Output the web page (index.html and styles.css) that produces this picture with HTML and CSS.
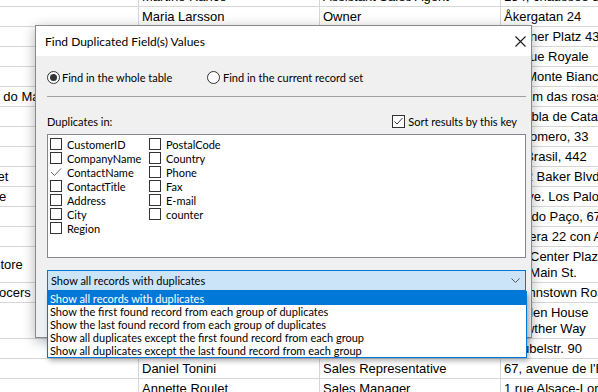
FILE: index.html
```html
<!DOCTYPE html>
<html>
<head>
<meta charset="utf-8">
<title>Find Duplicated Field(s) Values</title>
<link rel="stylesheet" href="styles.css">
</head>
<body>
<div class="grid">
  <div class="row"><div class="c">Folies gourmandes</div><div class="c">Martine Rancé</div><div class="c">Assistant Sales Agent</div><div class="c">184, chaussée de Tournai</div></div>
  <div class="row"><div class="c">Folk och fä HB</div><div class="c">Maria Larsson</div><div class="c">Owner</div><div class="c">Åkergatan 24</div></div>
  <div class="row"><div class="c">Frankenversand</div><div class="c">Peter Franken</div><div class="c">Marketing Manager</div><div class="c">Berliner Platz 43</div></div>
  <div class="row"><div class="c">France restauration</div><div class="c">Carine Schmitt</div><div class="c">Marketing Manager</div><div class="c">54, rue Royale</div></div>
  <div class="row"><div class="c">Franchi S.p.A.</div><div class="c">Paolo Accorti</div><div class="c">Sales Representative</div><div class="c">Via Monte Bianco 34</div></div>
  <div class="row"><div class="c">Furia Bacalhau e Frutos do Mar</div><div class="c">Lino Rodriguez</div><div class="c">Sales Manager</div><div class="c">Jardim das rosas n. 32</div></div>
  <div class="row"><div class="c">Galería del gastrónomo</div><div class="c">Eduardo Saavedra</div><div class="c">Marketing Manager</div><div class="c">Rambla de Cataluña, 23</div></div>
  <div class="row"><div class="c">Godos Cocina Típica</div><div class="c">José Pedro Freyre</div><div class="c">Sales Manager</div><div class="c">C/ Romero, 33</div></div>
  <div class="row"><div class="c">Gourmet Lanchonetes</div><div class="c">André Fonseca</div><div class="c">Sales Associate</div><div class="c">Av. Brasil, 442</div></div>
  <div class="row"><div class="c">Great Lakes Food Market</div><div class="c">Howard Snyder</div><div class="c">Marketing Manager</div><div class="c">2732 Baker Blvd.</div></div>
  <div class="row"><div class="c">GROSELLA-Restaurante</div><div class="c">Manuel Pereira</div><div class="c">Owner</div><div class="c">5ª Ave. Los Palos Grandes</div></div>
  <div class="row"><div class="c">Hanari Carnes</div><div class="c">Mario Pontes</div><div class="c">Accounting Manager</div><div class="c">Rua do Paço, 67</div></div>
  <div class="row"><div class="c">HILARIÓN-Abastos</div><div class="c">Carlos Hernández</div><div class="c">Sales Representative</div><div class="c">Carrera 22 con Ave. Carlos Soublette #8-35</div></div>
  <div class="row tall"><div class="c">Hungry Coyote Import Store</div><div class="c">Yoshi Latimer</div><div class="c">Sales Representative</div><div class="c wrap">City Center Plaza 516 Main St.</div></div>
  <div class="row"><div class="c">Hungry Owl All-Night Grocers</div><div class="c">Patricia McKenna</div><div class="c">Sales Associate</div><div class="c">8 Johnstown Road</div></div>
  <div class="row tall"><div class="c">Island Trading</div><div class="c">Helen Bennett</div><div class="c">Marketing Manager</div><div class="c wrap">Garden House Crowther Way</div></div>
  <div class="row"><div class="c">Königlich Essen</div><div class="c">Philip Cramer</div><div class="c">Sales Associate</div><div class="c">Maubelstr. 90</div></div>
  <div class="row"><div class="c blank">La corne d'abondance</div><div class="c">Daniel Tonini</div><div class="c">Sales Representative</div><div class="c">67, avenue de l'Europe</div></div>
  <div class="row"><div class="c blank">La maison d'Asie</div><div class="c">Annette Roulet</div><div class="c">Sales Manager</div><div class="c">1 rue Alsace-Lorraine</div></div>
</div>

<div class="dialog">
  <div class="titlebar">
    <span class="title">Find Duplicated Field(s) Values</span>
    <span class="close"><svg width="11" height="11" viewBox="0 0 11 11"><path d="M0.5 0.5 L10.5 10.5 M10.5 0.5 L0.5 10.5" stroke="#1a1a1a" stroke-width="1.1" fill="none"/></svg></span>
  </div>
  <div class="body">
    <div class="radios">
      <label class="radio r1"><svg width="13" height="13" viewBox="0 0 13 13"><circle cx="6.5" cy="6.5" r="6" fill="#fff" stroke="#333"/><circle cx="6.5" cy="6.5" r="3.5" fill="#333"/></svg><span>Find in the whole table</span></label>
      <label class="radio r2"><svg width="13" height="13" viewBox="0 0 13 13"><circle cx="6.5" cy="6.5" r="6" fill="#fff" stroke="#333"/></svg><span>Find in the current record set</span></label>
    </div>
    <div class="sep"></div>
    <div class="dup-row">
      <span>Duplicates in:</span>
      <label class="sort"><span class="sbox"><svg width="11" height="11" viewBox="0 0 11 11"><polyline points="1.5,5.5 4,8 9.5,2" fill="none" stroke="#333" stroke-width="1"/></svg></span><span>Sort results by this key</span></label>
    </div>
    <div class="listbox">
      <div class="lcol first">
        <div class="item"><span class="box"></span>CustomerID</div>
        <div class="item"><span class="box"></span>CompanyName</div>
        <div class="item"><span class="box checked"><svg width="12" height="12" viewBox="0 0 12 12"><polyline points="1,6 4.5,9.5 11,2.5" fill="none" stroke="#666" stroke-width="1"/></svg></span>ContactName</div>
        <div class="item"><span class="box"></span>ContactTitle</div>
        <div class="item"><span class="box"></span>Address</div>
        <div class="item"><span class="box"></span>City</div>
        <div class="item"><span class="box"></span>Region</div>
      </div>
      <div class="lcol">
        <div class="item"><span class="box"></span>PostalCode</div>
        <div class="item"><span class="box"></span>Country</div>
        <div class="item"><span class="box"></span>Phone</div>
        <div class="item"><span class="box"></span>Fax</div>
        <div class="item"><span class="box"></span>E-mail</div>
        <div class="item"><span class="box"></span>counter</div>
      </div>
    </div>
    <div class="combo">
      <span>Show all records with duplicates</span>
      <svg class="chev" width="9" height="5" viewBox="0 0 9 5"><polyline points="0.5,0.5 4.5,4.5 8.5,0.5" fill="none" stroke="#555" stroke-width="1"/></svg>
      <div class="droplist">
        <div class="opt sel">Show all records with duplicates</div>
        <div class="opt">Show the first found record from each group of duplicates</div>
        <div class="opt">Show the last found record from each group of duplicates</div>
        <div class="opt">Show all duplicates except the first found record from each group</div>
        <div class="opt">Show all duplicates except the last found record from each group</div>
      </div>
    </div>
  </div>
</div>
</body>
</html>
```

FILE: styles.css
```css
* { box-sizing: border-box; }
html, body { margin: 0; padding: 0; }
body {
  width: 598px;
  height: 392px;
  overflow: hidden;
  position: relative;
  background: #fff;
  color: #000;
  font-family: "Liberation Sans", Arial, sans-serif;
  font-size: 13px;
}

/* background data grid */
.grid {
  margin-top: -13px;
  margin-left: -142px;
  width: 803px;
}
.row {
  display: grid;
  grid-template-columns: 281px 181px 181px 160px;
  border-bottom: 1px solid #d6d6d6;
}
.c {
  min-height: 19px;
  padding: 0 3px;
  display: flex;
  align-items: center;
  line-height: 16px;
  white-space: nowrap;
  overflow: hidden;
  border-right: 1px solid #d6d6d6;
}
.row.tall .c { min-height: 35px; }
.c.wrap { white-space: normal; width: 120px; }
.c.blank { color: transparent; }

/* dialog */
.dialog {
  position: absolute;
  left: 35px;
  top: 25px;
  width: 497px;
  height: 313px;
  background: #f0f0f0;
  border: 1px solid #8a8a8a;
  box-shadow: 0 3px 12px rgba(0, 0, 0, 0.3);
  font-family: Lato, "Noto Sans", sans-serif;
  font-size: 11px;
  display: flex;
  flex-direction: column;
}
.titlebar {
  height: 30px;
  background: #fff;
  display: flex;
  align-items: center;
  justify-content: space-between;
  padding-left: 9px;
  flex: none;
  font-size: 12px;
}
.close {
  width: 22px;
  height: 30px;
  display: flex;
  align-items: center;
  justify-content: center;
}
.body {
  padding: 0 5px 0 11px;
  display: flex;
  flex-direction: column;
}
.radios {
  margin-top: 15px;
  height: 13px;
  display: flex;
  align-items: center;
}
.radio {
  display: flex;
  align-items: center;
  gap: 2px;
  white-space: nowrap;
}
.radio svg { flex: none; }
.r1 { width: 160px; }
.r2 { gap: 3px; }
.sep {
  margin-top: 12px;
  height: 1px;
  background: #a0a0a0;
}
.dup-row {
  margin-top: 18px;
  height: 13px;
  display: flex;
  align-items: center;
  justify-content: space-between;
  padding-right: 9px;
}
.sort {
  display: flex;
  align-items: center;
  gap: 3px;
}
.sbox {
  width: 13px;
  height: 13px;
  border: 1px solid #333;
  background: #fff;
  display: flex;
  align-items: center;
  justify-content: center;
}
.listbox {
  margin-top: 6px;
  height: 124px;
  background: #fff;
  border: 1px solid #828790;
  padding: 2px 0 0 2px;
  display: flex;
}
.lcol { display: flex; flex-direction: column; }
.lcol.first { width: 99px; }
.item {
  height: 14px;
  display: flex;
  align-items: center;
  gap: 5px;
  white-space: nowrap;
}
.box {
  width: 12px;
  height: 12px;
  border: 1px solid #333;
  background: #fff;
  flex: none;
}
.box.checked { border: none; background: transparent; }
.box.checked svg { display: block; }

.combo {
  margin-top: 12px;
  height: 21px;
  background: #cce4f7;
  border: 1px solid #0078d7;
  position: relative;
  display: flex;
  align-items: center;
  justify-content: space-between;
  padding: 0 5px 0 3px;
}
.droplist {
  position: absolute;
  left: -1px;
  top: 20px;
  width: 480px;
  background: #fff;
  border: 1px solid #0078d7;
  box-shadow: 2px 3px 5px rgba(0, 0, 0, 0.3);
}
.opt {
  height: 13px;
  line-height: 13px;
  padding-left: 2px;
  white-space: nowrap;
}
.opt.sel { background: #0078d7; color: #fff; }
```
